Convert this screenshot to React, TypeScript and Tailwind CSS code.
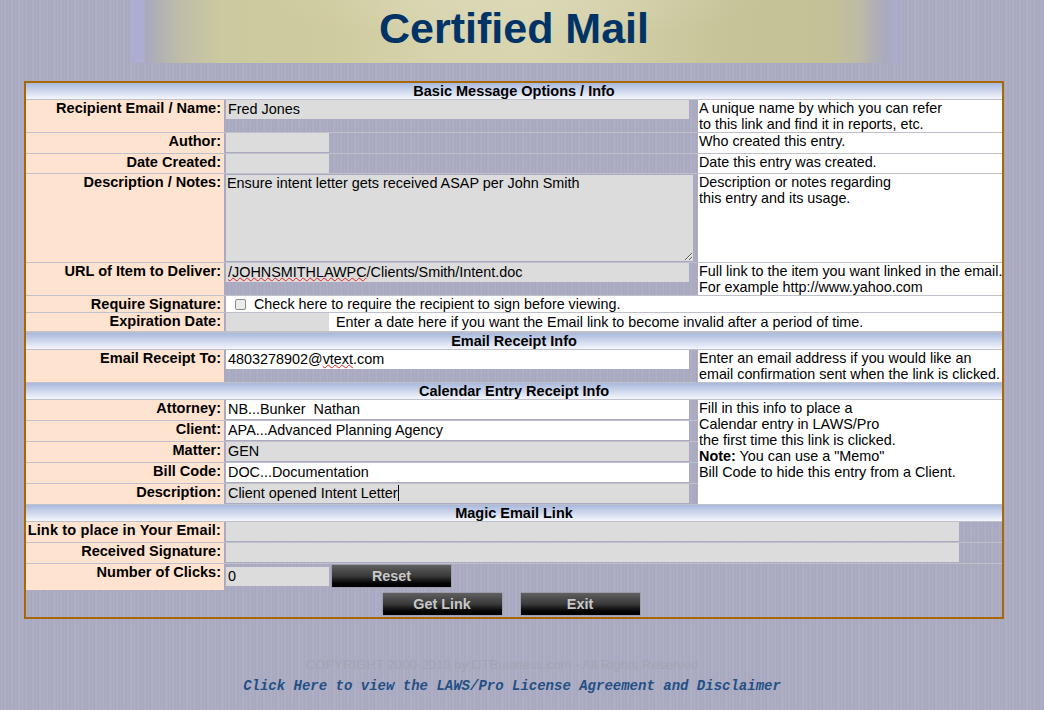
const stripes =
  "bg-[repeating-linear-gradient(90deg,#a7a8bf_0px,#aeafc5_2px,#a5a6bd_3px,#b0b1c6_5px,#a8a9c0_7px)]";

function SectionHeader({ title }: { title: string }) {
  return (
    <div className="h-[17px] border-b border-[#bfc0ca] bg-gradient-to-b from-[#a9b9dc] to-[#f4f6fc] text-center text-[14.5px] font-bold leading-[16px] text-black">
      {title}
    </div>
  );
}

function Label({ children, h }: { children: React.ReactNode; h: string }) {
  return (
    <div className={`${h} w-[198px] shrink-0 whitespace-nowrap bg-[#ffe3d1] pr-[3px] text-right text-[14.55px] font-bold leading-[16px]`}>
      {children}
    </div>
  );
}

function Field({
  children,
  w = "w-[463px]",
  white = false,
}: {
  children?: React.ReactNode;
  w?: string;
  white?: boolean;
}) {
  return (
    <div
      className={`${w} h-[19px] shrink-0 pl-[2px] leading-[18px] whitespace-pre ${white ? "bg-white" : "bg-[#dcdcdc]"}`}
    >
      {children}
    </div>
  );
}

function Row({
  label,
  h,
  help,
  children,
}: {
  label: string;
  h: string;
  help?: React.ReactNode;
  children?: React.ReactNode;
}) {
  return (
    <div className="flex border-b border-[#bfc0ca]">
      <Label h={h}>{label}</Label>
      <div className="ml-[2px] w-[472px] shrink-0">{children}</div>
      {help !== undefined && (
        <div className="grow whitespace-nowrap bg-white pl-[1px] text-[14.33px] leading-[16px]">{help}</div>
      )}
    </div>
  );
}

function DarkButton({ children, w = "w-[121px]" }: { children: string; w?: string }) {
  return (
    <button
      type="button"
      className={`${w} h-[24px] rounded-[1px] border border-[#9c9dae] bg-gradient-to-b from-[#606060] via-[#3a3a3a] to-black font-bold leading-[20px] text-[#c8c8c8]`}
    >
      {children}
    </button>
  );
}

function Squiggle({ children }: { children: string }) {
  return (
    <span className="underline decoration-wavy decoration-[#e02020] decoration-1 underline-offset-[0px]">
      {children}
    </span>
  );
}

export default function App() {
  return (
    <div
      className={`h-[710px] w-[1044px] overflow-hidden ${stripes} font-['Liberation_Sans',Arial,sans-serif] text-[14.4px] text-black`}
    >
      <header className="ml-[130px] h-[63px] w-[768px] [background-image:radial-gradient(ellipse_at_50%_0%,#dedabb99,transparent_45%),linear-gradient(90deg,#adaecf_0px,#adaecf_14px,#a9a9bb_16px,#b2b2b4_30px,#bfbda9_50px,#cbc99f_90px,#cecb9e_200px,#d6d3ad_300px,#d8d5b0_400px,#d0cda5_500px,#c6c398_600px,#c4c197_700px,#bdbba6_730px,#b0afb4_745px,#a9a9c0_757px,#adaecf_768px)] text-center">
        <h1 className="pt-[3px] text-[43px] font-bold leading-[50px] text-[#003366]">Certified Mail</h1>
      </header>

      <main className="mx-[24px] mt-[18px] h-[538px] w-[980px] border-2 border-[#a86808]">
        <SectionHeader title="Basic Message Options / Info" />
        <Row
          label="Recipient Email / Name:"
          h="h-[32px]"
          help={
            <>
              A unique name by which you can refer
              <br />
              to this link and find it in reports, etc.
            </>
          }
        >
          <Field>Fred Jones</Field>
        </Row>
        <Row label="Author:" h="h-[20px]" help="Who created this entry.">
          <Field w="w-[103px]" />
        </Row>
        <Row label="Date Created:" h="h-[19px]" help="Date this entry was created.">
          <Field w="w-[103px]" />
        </Row>
        <Row
          label="Description / Notes:"
          h="h-[88px]"
          help={
            <>
              Description or notes regarding
              <br />
              this entry and its usage.
            </>
          }
        >
          <textarea
            readOnly
            spellCheck={false}
            defaultValue="Ensure intent letter gets received ASAP per John Smith"
            className="-ml-[1px] block h-[88px] w-[469px] border border-[#a9aac0] bg-[#dcdcdc] pl-[1px] leading-[16px] outline-none"
          />
        </Row>
        <Row
          label="URL of Item to Deliver:"
          h="h-[32px]"
          help={
            <>
              Full link to the item you want linked in the email.
              <br />
              For example http://www.yahoo.com
            </>
          }
        >
          <Field>
            <Squiggle>/JOHNSMITHLAWPC</Squiggle>/Clients/Smith/Intent.doc
          </Field>
        </Row>
        <div className="flex border-b border-[#bfc0ca]">
          <Label h="h-[16px]">Require Signature:</Label>
          <div className="ml-[2px] flex grow items-center bg-white pl-[9px] text-[14.33px] leading-[16px]">
            <input
              type="checkbox"
              className="mr-[8px] size-[11px] appearance-none rounded-[2px] border border-[#8c8c8c] bg-[#ececec]"
            />
            Check here to require the recipient to sign before viewing.
          </div>
        </div>
        <div className="flex border-b-2 border-[#bfc0ca]">
          <Label h="h-[18px]">Expiration Date:</Label>
          <div className="ml-[2px] flex grow bg-white">
            <div className="h-[18px] w-[103px] bg-[#dcdcdc]" />
            <div className="pl-[7px] text-[14.33px] leading-[18px]">
              Enter a date here if you want the Email link to become invalid after a period of time.
            </div>
          </div>
        </div>

        <SectionHeader title="Email Receipt Info" />
        <div className="flex border-b border-[#bfc0ca]">
          <Label h="h-[32px]">Email Receipt To:</Label>
          <div className="ml-[2px] w-[472px] shrink-0">
            <Field white>
              4803278902@<Squiggle>vtext</Squiggle>.com
            </Field>
          </div>
          <div className="grow whitespace-nowrap bg-white pl-[1px] text-[14.33px] leading-[16px]">
            Enter an email address if you would like an
            <br />
            email confirmation sent when the link is clicked.
          </div>
        </div>

        <SectionHeader title="Calendar Entry Receipt Info" />
        <div className="flex border-b border-[#bfc0ca]">
          <div className="w-[672px] shrink-0">
            {[
              { label: "Attorney:", value: "NB...Bunker  Nathan", white: true },
              { label: "Client:", value: "APA...Advanced Planning Agency", white: true },
              { label: "Matter:", value: "GEN", white: false },
              { label: "Bill Code:", value: "DOC...Documentation", white: true },
            ].map((r) => (
              <div key={r.label} className="flex border-b border-[#bfc0ca]">
                <Label h="h-[20px]">{r.label}</Label>
                <div className="ml-[2px]">
                  <Field white={r.white}>{r.value}</Field>
                </div>
              </div>
            ))}
            <div className="flex">
              <Label h="h-[20px]">Description:</Label>
              <div className="ml-[2px]">
                <Field>
                  Client opened Intent Letter<span className="border-l border-black" />
                </Field>
              </div>
            </div>
          </div>
          <div className="grow bg-white pl-[1px] text-[14.4px] leading-[16px]">
            Fill in this info to place a
            <br />
            Calendar entry in LAWS/Pro
            <br />
            the first time this link is clicked.
            <br />
            <b>Note:</b> You can use a "Memo"
            <br />
            Bill Code to hide this entry from a Client.
          </div>
        </div>

        <SectionHeader title="Magic Email Link" />
        <div className="flex border-b border-[#bfc0ca]">
          <Label h="h-[20px]">
            <span className="tracking-[0.14px]">Link to place in Your Email:</span>
          </Label>
          <div className="ml-[2px]">
            <Field w="w-[733px]" />
          </div>
        </div>
        <div className="flex border-b border-[#bfc0ca]">
          <Label h="h-[20px]">Received Signature:</Label>
          <div className="ml-[2px]">
            <Field w="w-[733px]" />
          </div>
        </div>
        <div className="flex">
          <Label h="h-[26px]">Number of Clicks:</Label>
          <div className="ml-[2px] flex items-start gap-[2px]">
            <div className="mt-[3px]">
              <Field w="w-[103px]">0</Field>
            </div>
            <DarkButton>Reset</DarkButton>
          </div>
        </div>
        <div className="flex justify-center gap-[17px] pr-[6px] pt-[2px]">
          <DarkButton>Get Link</DarkButton>
          <DarkButton>Exit</DarkButton>
        </div>
      </main>

      <footer className="mt-[38px] w-[1024px] text-center">
        <div className="h-[18px] pr-[20px] text-[13.2px] leading-[16px] text-[#a3a4b4]">
          COPYRIGHT 2000-2010 by DTBusiness.com - All Rights Reserved
        </div>
        <a className="font-['Liberation_Mono',monospace] text-[14px] font-bold italic leading-[16px] text-[#234f85]">
          Click Here to view the LAWS/Pro License Agreement and Disclaimer
        </a>
      </footer>
    </div>
  );
}
